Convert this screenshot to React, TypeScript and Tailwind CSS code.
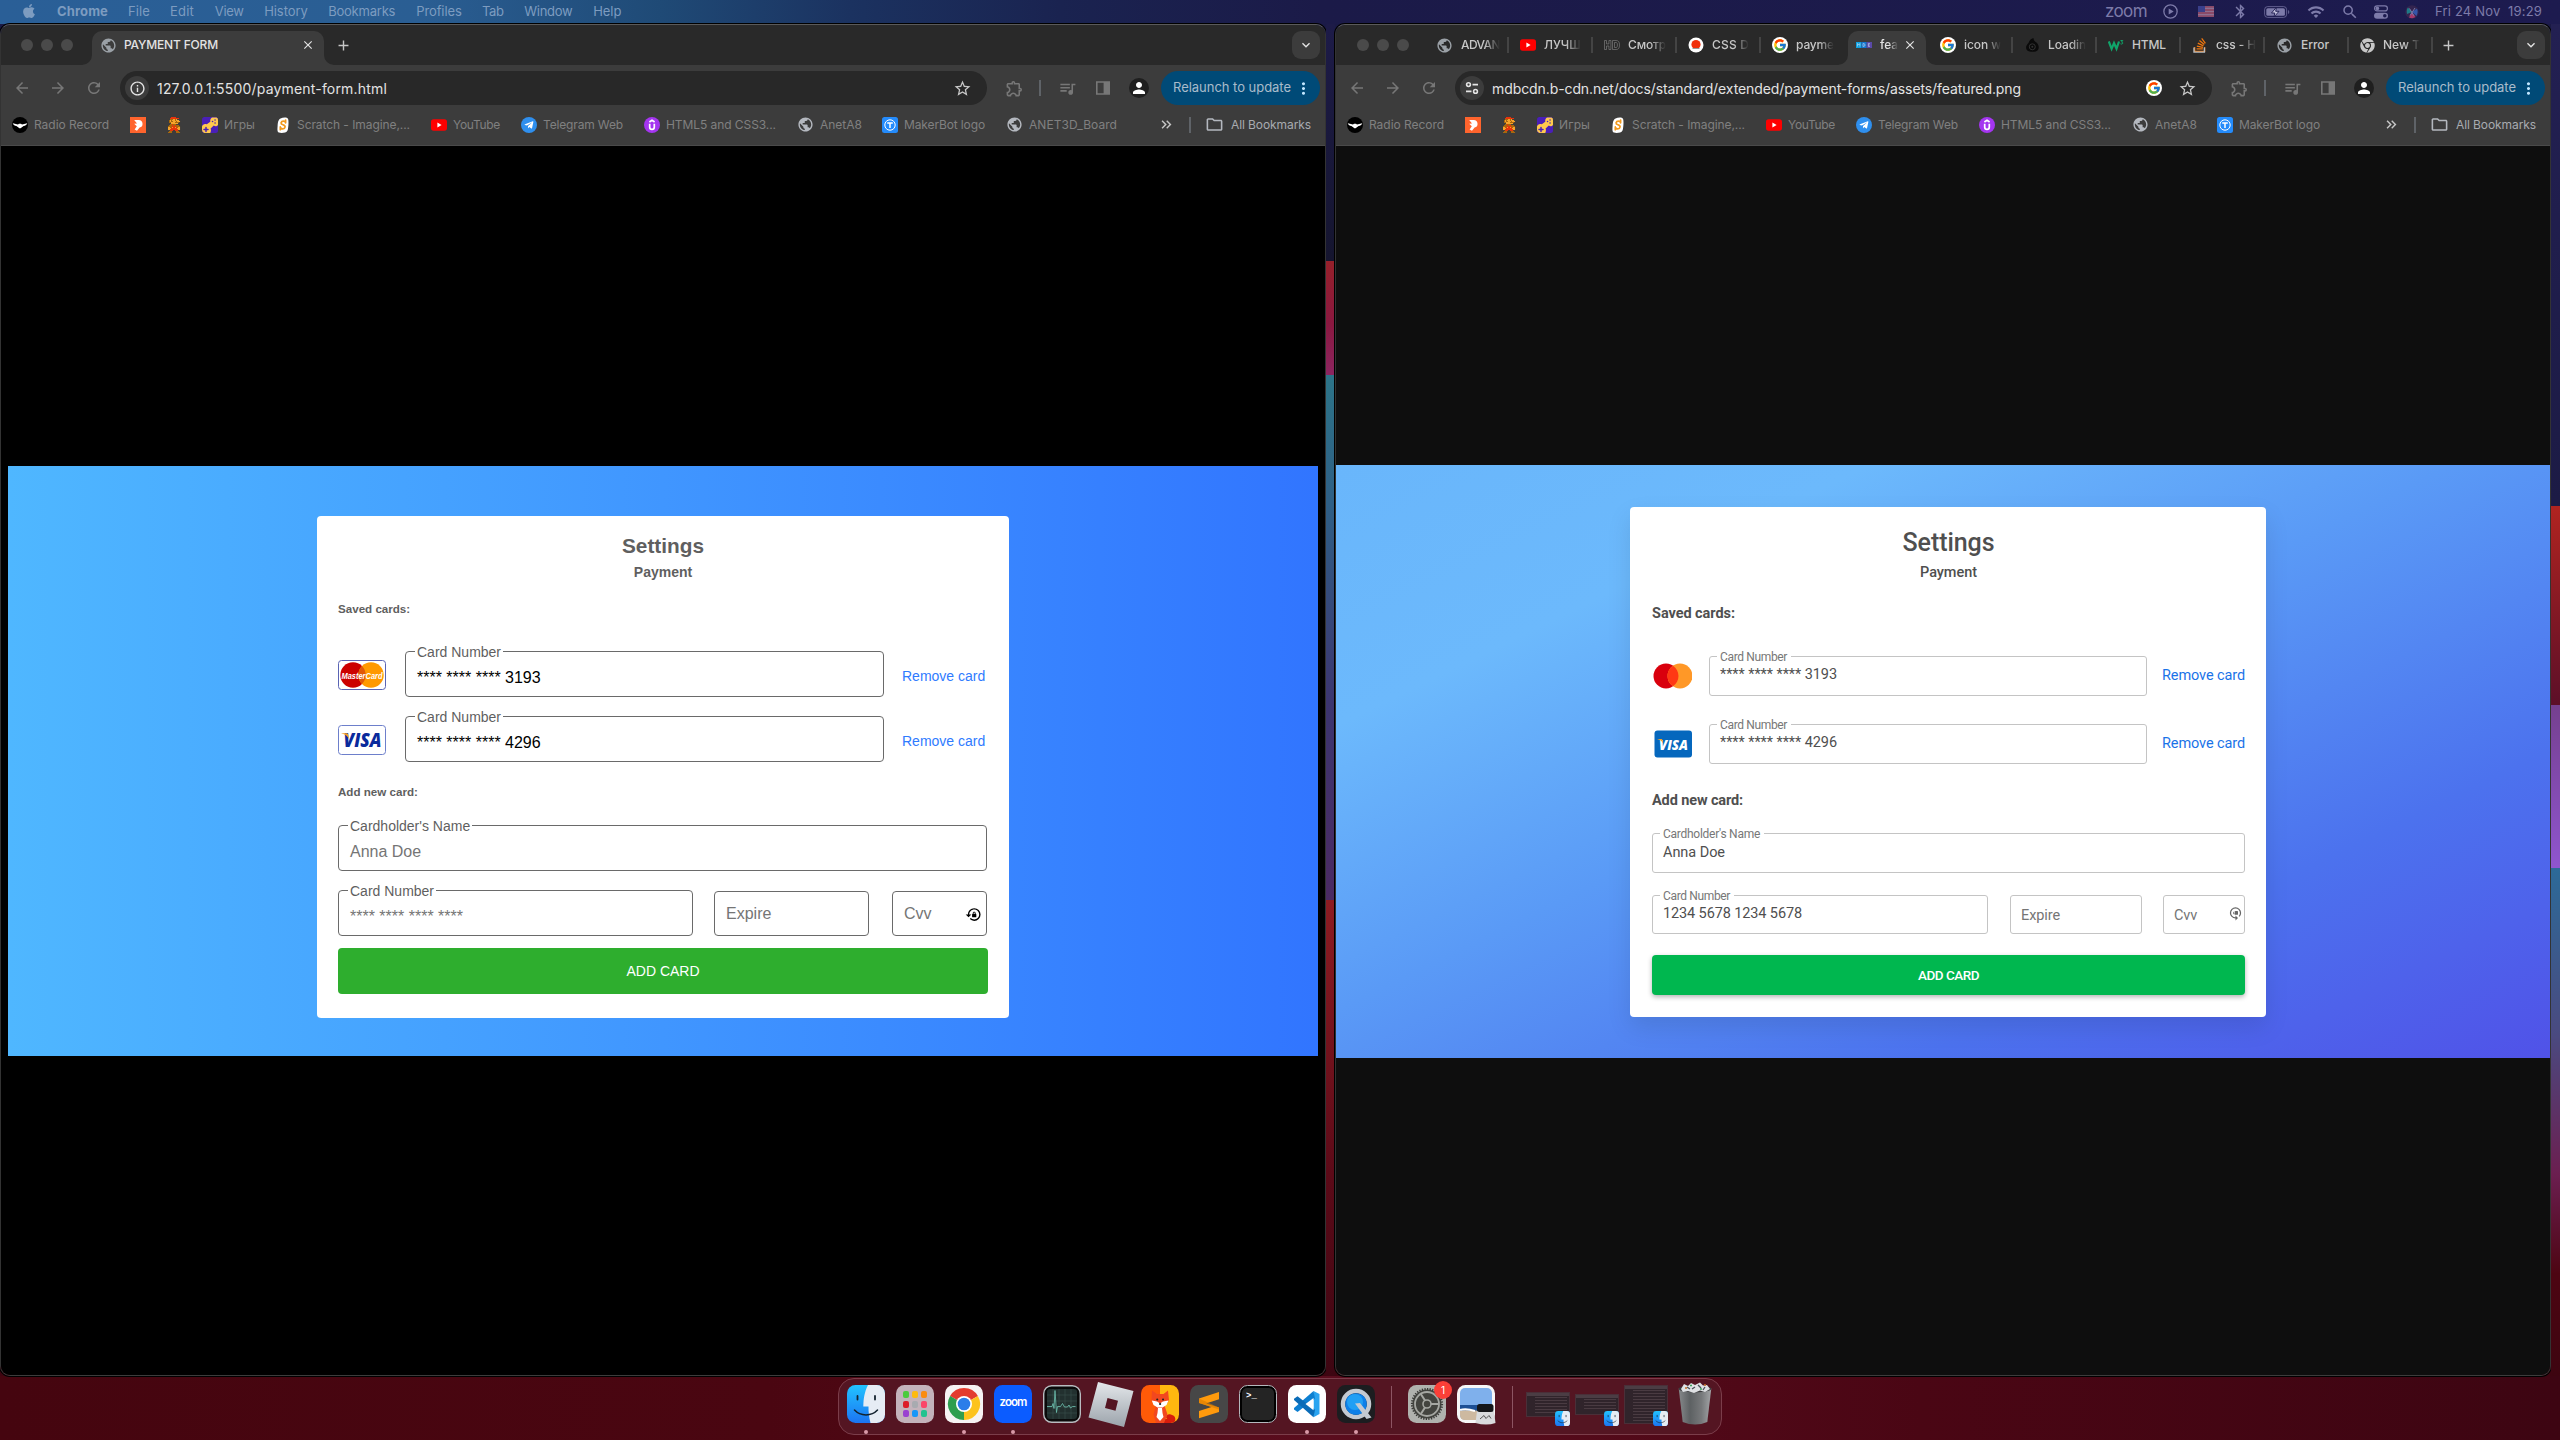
import React, { useLayoutEffect, useRef, useState } from "react";
import { FaApple, FaTelegramPlane, FaStackOverflow, FaChrome } from "react-icons/fa";
import { FcGoogle } from "react-icons/fc";
import {
  MdArrowBack,
  MdArrowForward,
  MdRefresh,
  MdStarBorder,
  MdOutlineExtension,
  MdQueueMusic,
  MdPerson,
  MdOutlineFolder,
  MdMoreVert,
  MdPublic,
  MdLockReset,
  MdWifi,
  MdBluetooth,
  MdAdd,
  MdClose,
  MdKeyboardArrowDown,
  MdOutlineInfo,
  MdKeyboardDoubleArrowRight,
  MdSearch,
} from "react-icons/md";

/* Text tracked so that it fills a given width. */
function Fit({ w, className = "", children }: { w: number; className?: string; children: string }) {
  const ref = useRef<HTMLSpanElement>(null);
  const [ls, setLs] = useState(0);
  useLayoutEffect(() => {
    const el = ref.current;
    if (!el) return;
    setLs((w - el.getBoundingClientRect().width) / children.length);
  }, [w, children]);
  return (
    <span ref={ref} className={"inline-block whitespace-pre " + className} style={{ letterSpacing: ls + "px" }}>
      {children}
    </span>
  );
}

/* ---------- small icons ---------- */

const Globe = ({ c = "text-[#9aa0a6]" }: { c?: string }) => <MdPublic className={"size-[17px] shrink-0 " + c} />;

const YouTubeIcon = () => (
  <svg viewBox="0 0 16 16" className="size-4 shrink-0">
    <rect x="0" y="2.3" width="16" height="11.4" rx="2.6" fill="#f00" />
    <path d="M6.4 5.4 10.6 8 6.4 10.6z" fill="#fff" />
  </svg>
);

const RadioIcon = () => (
  <svg viewBox="0 0 16 16" className="size-4 shrink-0">
    <circle cx="8" cy="8" r="8" fill="#000" />
    <path d="M.8 6.2 6 7.4l1-.6h2l1 .6 5.2-1.2c-.3 1.600-1.600 2.500-3.600 2.700L9.600 10.600 8 11.400l-1.600-.8L4.400 8.900C2.400 8.700 1.100 7.800.8 6.200z" fill="#fff" />
  </svg>
);

const OrangeIcon = () => (
  <svg viewBox="0 0 16 16" className="size-4 shrink-0">
    <rect width="16" height="16" fill="#ff642d" />
    <path d="M4.200 3h4.600a3.800 3.800 0 0 1 .8 7.500l-2.600 3.300-2.400-1.300 2.200-3.200L4.200 6.800 7 6.500z" fill="#fff" />
  </svg>
);

const MARIO = [
  "...rrrrr....",
  "..rrrrrrrrr.",
  "..bbbyyby...",
  ".bybyyybyyy.",
  ".bybbyyybyyy",
  ".bbyyyybbbb.",
  "...yyyyyyy..",
  "..bbrbbb....",
  ".bbbrbbrbbb.",
  "bbbbrrrrbbbb",
  "yybryrryrbyy",
  "yyyrrrrrryyy",
  "yyrrrrrrrryy",
  "..rrr..rrr..",
  ".bbb....bbb.",
  "bbbb....bbbb",
];
const MarioIcon = () => (
  <svg viewBox="-2 0 16 16" className="size-4 shrink-0">
    {MARIO.flatMap((row, y) =>
      row.split("").map((ch, x) =>
        ch === "." ? null : (
          <rect key={x + "-" + y} x={x} y={y} width="1.050" height="1.050" fill={ch === "r" ? "#e6340c" : ch === "b" ? "#a8680c" : "#f5a42c"} />
        ),
      ),
    )}
  </svg>
);

const GamesIcon = () => (
  <svg viewBox="0 0 16 16" className="size-4 shrink-0">
    <rect width="16" height="16" rx="2.500" fill="#4a1fb8" />
    <path d="M10 .5h4.500Q16 .8 16 3v5c-1.200 1.600-3 1.500-4.200.6L8.600 11.500c.6 1.800.4 3-.4 4.500H2.500Q.2 15.600 0 13V9.500c.6-2.200 2.600-3 4.800-2.200L8.300 4.700C8 2.800 8.600 1.200 10 .5z" fill="#ffc94d" />
    <path d="M2 12.500h4M4 10.500v4M10.500 4.500h.1M13 3h.1M13 6h.1" stroke="#4a1fb8" strokeWidth="1.500" strokeLinecap="round" />
  </svg>
);

const ScratchIcon = () => (
  <svg viewBox="0 0 16 16" className="size-4 shrink-0">
    <path d="M5.500 1.500C8 .2 12 0 13 1.800c1 2 .4 9.500-.6 12C11.600 16 6 16.300 4 15.600c-2-.8-1.600-3-1.400-6.500C2.800 6 3 2.800 5.500 1.500z" fill="#fff" />
    <path d="M10.600 5.600c-.6-2-3.900-2.200-4.500.2-.5 2.400 4.400 1.500 4 4.200-.4 2.600-4.200 2.300-4.700.2M10.600 3v2.800M5.300 12.700v-2.800" stroke="#f39a1e" strokeWidth="1.700" fill="none" strokeLinecap="round" />
  </svg>
);

const TelegramIcon = () => (
  <span className="flex size-4 shrink-0 items-center justify-center rounded-full bg-[#2f8fee] text-white">
    <FaTelegramPlane className="mr-px size-[10px]" />
  </span>
);

const UdemyIcon = () => (
  <svg viewBox="0 0 16 16" className="size-4 shrink-0">
    <circle cx="8" cy="8" r="8" fill="#a435f0" />
    <path d="M5.400 5 8 3.300 10.600 5M5.700 6.700V10c0 3.200 4.600 3.200 4.600 0V6.700" stroke="#fff" strokeWidth="1.700" fill="none" />
  </svg>
);

const MakerIcon = () => (
  <svg viewBox="0 0 16 16" className="size-4 shrink-0">
    <rect width="16" height="16" rx="2.500" fill="#248bfb" />
    <circle cx="8" cy="8" r="5.200" fill="none" stroke="#fff" strokeWidth="1" />
    <path d="M5.200 5.900h5.600M8 5.900v5.200" stroke="#fff" strokeWidth="1.500" />
  </svg>
);

const HdIcon = () => (
  <svg viewBox="0 0 16 16" className="size-4 shrink-0" fill="#292929" stroke="#8a8a8a" strokeWidth=".6">
    <path d="M.5 3.500h2v3.400h2.400V3.500h2v9h-2V9H2.500v3.500h-2zM8.500 3.500H12c2.500 0 3.500 1.500 3.500 4.500s-1 4.500-3.500 4.500H8.500zM10.500 5.500H12c1 0 1.400.8 1.400 2.500s-.4 2.500-1.400 2.500h-1.500z" fillRule="evenodd" />
  </svg>
);

const CssIcon = () => (
  <svg viewBox="0 0 16 16" className="size-4 shrink-0">
    <circle cx="8" cy="8" r="7.500" fill="#fff" />
    <circle cx="8" cy="7.500" r="4.600" fill="#f0300c" />
    <path d="M4.500 11.500h7" stroke="#999" strokeWidth="1" />
  </svg>
);

const GoogleIcon = () => (
  <span className="flex size-4 shrink-0 items-center justify-center rounded-full bg-white">
    <FcGoogle className="size-[14px]" />
  </span>
);

const MdbIcon = () => (
  <svg viewBox="0 0 16 16" className="size-4 shrink-0">
    <rect x="0" y="5" width="5.400" height="6" fill="#0fa0e0" />
    <rect x="5.400" y="5" width="5.300" height="6" fill="#1277d0" />
    <rect x="10.700" y="5" width="5.300" height="6" fill="#5a49a8" />
    <path d="M1.500 9.500v-3l1.200 1.500 1.200-1.500v3M7 6.500v3q2.500-.2 2-1.500.2-1.500-2-1.500M12.400 6.500v3h1.500M12.400 6.500h1.500M12.400 8h1.500" stroke="#cde" strokeWidth=".6" fill="none" />
  </svg>
);

const DropIcon = () => (
  <svg viewBox="0 0 16 16" className="size-4 shrink-0">
    <path d="M9.500 1C6 2 5.500 4 4.500 6c-2 2-3 4-2 6.500 1 2.500 9 3.500 11.500.5 1.500-3 .5-5.500-1.500-7.500-1-.8-3-1.500-3-4.500z" fill="#0a0a0a" />
    <circle cx="8.300" cy="9.800" r="3" fill="none" stroke="#333" strokeWidth="1" />
    <circle cx="8.300" cy="9.800" r="1" fill="#333" />
  </svg>
);

const W3Icon = () => (
  <svg viewBox="0 0 16 16" className="size-4 shrink-0" fill="none" stroke="#10a56a">
    <path d="M.8 4.500 3.600 11.800 6 6l2.500 5.800L11 4.500" strokeWidth="2.200" />
    <path d="M12.500 3.500h2.300L13.500 5q1.600.2 1.200 1.500-.8 1-2.200.3" strokeWidth="1" />
  </svg>
);

const StackIcon = () => (
  <span className="relative flex size-4 shrink-0">
    <FaStackOverflow className="size-4 text-[#f0760d]" />
    <svg viewBox="0 0 16 16" className="absolute inset-0 size-4" fill="none" stroke="#b8bcc0" strokeWidth="1.400">
      <path d="M2 10.500v4.600h10.400v-4.600" />
    </svg>
  </span>
);

const SiteInfo = () => (
  <svg viewBox="0 0 16 16" className="size-4" fill="none" stroke="#e3e3e3" strokeWidth="1.600">
    <circle cx="4.500" cy="4.600" r="1.900" />
    <path d="M8.500 4.600H14M2 11.400h5.500" />
    <circle cx="11.500" cy="11.400" r="1.900" />
  </svg>
);

/* ---------- browser window ---------- */

type Bookmark = { icon: React.ReactNode; label?: string; w: number; cell: string };

const BOOKMARKS: Bookmark[] = [
  { icon: <RadioIcon />, label: "Radio Record", w: 75, cell: "w-[118px]" },
  { icon: <OrangeIcon />, w: 0, cell: "w-[36px]" },
  { icon: <MarioIcon />, w: 0, cell: "w-[36px]" },
  { icon: <GamesIcon />, label: "Игры", w: 31, cell: "w-[73px]" },
  { icon: <ScratchIcon />, label: "Scratch - Imagine,...", w: 113, cell: "w-[156px]" },
  { icon: <YouTubeIcon />, label: "YouTube", w: 47, cell: "w-[90px]" },
  { icon: <TelegramIcon />, label: "Telegram Web", w: 80, cell: "w-[123px]" },
  { icon: <UdemyIcon />, label: "HTML5 and CSS3...", w: 110, cell: "w-[153px]" },
  { icon: <Globe c="text-[#b4b8bf]" />, label: "AnetA8", w: 42, cell: "w-[85px]" },
  { icon: <MakerIcon />, label: "MakerBot logo", w: 81, cell: "w-[124px]" },
  { icon: <Globe c="text-[#b4b8bf]" />, label: "ANET3D_Board", w: 88, cell: "w-[120px]" },
];

function BrowserWindow({
  width,
  lights,
  tabs,
  site,
  url,
  google,
  bookmarks,
  children,
}: {
  width: string;
  lights: string;
  tabs: React.ReactNode;
  site: React.ReactNode;
  url: React.ReactNode;
  google?: boolean;
  bookmarks: Bookmark[];
  children: React.ReactNode;
}) {
  return (
    <div className={"flex h-[1352px] shrink-0 flex-col overflow-hidden rounded-[10px] border border-[#5a5a5a] border-x-[#333] border-b-[#3c3c3c] shadow-[0_0_0_1px_#000] " + width}>
      <div className="flex h-10 shrink-0 items-end bg-[#292929]">
        <div className={"flex h-10 shrink-0 items-center gap-2 " + lights}>
          <span className="size-3 rounded-full bg-[#4a4a4a]" />
          <span className="size-3 rounded-full bg-[#4a4a4a]" />
          <span className="size-3 rounded-full bg-[#4a4a4a]" />
        </div>
        {tabs}
        <div className="mb-[6px] ml-auto mr-[5px] flex h-7 w-7 items-center justify-center rounded-[9px] bg-[#3c3c3c] text-[#e3e3e3]">
          <MdKeyboardArrowDown className="size-4" />
        </div>
      </div>
      <div className="flex h-[46px] shrink-0 items-center bg-[#3c3c3c] text-[#777]">
        <div className="flex w-[119px] shrink-0 items-center pl-3">
          <MdArrowBack className="size-[18px]" />
          <MdArrowForward className="ml-[18px] size-[18px]" />
          <MdRefresh className="ml-[18px] size-[18px]" />
        </div>
        <div className="flex h-[34px] flex-1 items-center rounded-full bg-[#282828] pl-[5px] pr-[15px] text-[#e3e3e3]">
          <span className="flex size-6 items-center justify-center rounded-full bg-[#3c3c3c]">{site}</span>
          <span className="ml-2 flex-1 text-[14px]">{url}</span>
          {google && (
            <span className="mr-4">
              <GoogleIcon />
            </span>
          )}
          <MdStarBorder className="size-[19px] text-[#c7c7c7]" />
        </div>
        <MdOutlineExtension className="ml-[18px] size-[19px] shrink-0" />
        <span className="ml-[15px] h-4 w-[2px] shrink-0 bg-[#5f6368]" />
        <MdQueueMusic className="ml-[17px] size-[19px] shrink-0" />
        <svg viewBox="0 0 18 18" className="ml-[17px] size-[18px] shrink-0" fill="#777">
          <path d="M2 2.200h14v13.600H2zM3.600 3.800v10.400h6V3.800z" fillRule="evenodd" />
        </svg>
        <span className="ml-[17px] flex size-5 shrink-0 items-center justify-center rounded-full bg-[#1f1f1f] text-white">
          <MdPerson className="size-[18px]" />
        </span>
        <div className="ml-3 mr-[5px] flex h-[34px] w-[159px] shrink-0 items-center rounded-full bg-[#004a77] pl-3 text-[13px] text-[#a9bccb]">
          <Fit w={118}>Relaunch to update</Fit>
          <MdMoreVert className="ml-[3px] size-[19px] text-[#c2e7ff]" />
        </div>
      </div>
      <div className="flex h-[35px] shrink-0 items-start border-b border-[#4a4a4a] bg-[#3c3c3c] pl-[11px] text-[12px] text-[#808080]">
        <div className="flex h-[27px] w-full items-center">
          {bookmarks.map((b, i) => (
            <div key={i} className={"flex shrink-0 items-center gap-[6px] " + b.cell}>
              {b.icon}
              {b.label && <Fit w={b.w}>{b.label}</Fit>}
            </div>
          ))}
          <div className="ml-auto flex shrink-0 items-center pr-[14px] text-[#a8abb0]">
            <MdKeyboardDoubleArrowRight className="size-[17px] text-[#c7c7c7]" />
            <span className="ml-[14px] h-4 w-[2px] bg-[#5f6368]" />
            <MdOutlineFolder className="ml-[14px] size-[19px] text-[#b4b8bf]" />
            <span className="ml-[7px]">
              <Fit w={80}>All Bookmarks</Fit>
            </span>
          </div>
        </div>
      </div>
      {children}
    </div>
  );
}

/* Concave foot on either side of the active tab. */
const Foot = ({ flip }: { flip?: boolean }) => (
  <svg viewBox="0 0 10 10" className={"size-[10px] shrink-0 self-end " + (flip ? "-scale-x-100" : "")}>
    <path d="M10 0v10H0A10 10 0 0 0 10 0z" fill="#3c3c3c" />
  </svg>
);

function Tab({ icon, label, w, noSep, fade = true }: { icon: React.ReactNode; label: string; w: number; noSep?: boolean; fade?: boolean }) {
  return (
    <div className="flex h-10 w-[84px] shrink-0 items-center pl-[11px] text-[12px] font-medium text-[#c7c7c7]">
      {icon}
      <span className={"ml-2 whitespace-nowrap " + (fade ? "[mask-image:linear-gradient(to_right,black_60%,transparent)]" : "")}>
        <Fit w={w}>{label}</Fit>
      </span>
      {!noSep && <span className="ml-auto h-4 w-[2px] bg-[#444]" />}
    </div>
  );
}

const LeftTabs = () => (
  <>
    <div className="ml-[8px] flex shrink-0">
      <Foot />
      <div className="flex h-[34px] w-[232px] items-center rounded-t-[10px] bg-[#3c3c3c] pb-[6px] pl-2 text-[12px] font-medium text-[#e3e3e3]">
        <Globe />
        <span className="ml-[7px]">
          <Fit w={94}>PAYMENT FORM</Fit>
        </span>
        <MdClose className="ml-auto mr-[9px] size-[14px]" />
      </div>
      <Foot flip />
    </div>
    <MdAdd className="mb-[11px] ml-px size-[17px] text-[#c7c7c7]" />
  </>
);

const RightTabs = () => (
  <>
    <Tab icon={<Globe />} label="ADVAN" w={39} />
    <Tab icon={<YouTubeIcon />} label="ЛУЧШ" w={37} />
    <Tab icon={<HdIcon />} label="Смотр" w={38} />
    <Tab icon={<CssIcon />} label="CSS D" w={37} />
    <Tab icon={<GoogleIcon />} label="payme" w={38} noSep />
    <div className="-ml-[7px] flex shrink-0">
      <Foot />
      <div className="flex h-[34px] w-[78px] items-center rounded-t-[10px] bg-[#3c3c3c] pb-[6px] pl-2 text-[12px] font-medium text-[#e3e3e3]">
        <MdbIcon />
        <span className="ml-2 whitespace-nowrap [mask-image:linear-gradient(to_right,black_50%,transparent)]">
          <Fit w={18}>fea</Fit>
        </span>
        <MdClose className="ml-auto mr-[9px] size-[14px]" />
      </div>
      <Foot flip />
    </div>
    <div className="-ml-[7px] flex shrink-0">
      <Tab icon={<GoogleIcon />} label="icon w" w={37} />
      <Tab icon={<DropIcon />} label="Loadin" w={38} />
      <Tab icon={<W3Icon />} label="HTML" w={34} fade={false} />
      <Tab icon={<StackIcon />} label="css - H" w={40} />
      <Tab icon={<Globe />} label="Error" w={28} fade={false} />
      <Tab icon={<FaChrome className="size-[15px] shrink-0 text-[#c7c7c7]" />} label="New T" w={37} />
    </div>
    <MdAdd className="mb-[11px] ml-[7px] size-[17px] text-[#c7c7c7]" />
  </>
);

/* ---------- payment form, browser default look ---------- */

function LeftField({ label, children, className, shift = "pt-[7px]" }: { label?: string; children: React.ReactNode; className: string; shift?: string }) {
  return (
    <div className={"relative flex items-center rounded-[4px] border border-[#6a6a6a] pl-[11px] text-[16px] leading-5 " + className + " " + shift}>
      {label && <span className="absolute -top-2 left-[9px] bg-white px-[2px] text-[14px] leading-4 text-[#5f5f5f]">{label}</span>}
      {children}
    </div>
  );
}

const MasterCardClassic = () => (
  <svg viewBox="0 0 48 30" className="mt-px h-[30px] w-12 shrink-0">
    <rect x=".5" y=".5" width="47" height="29" rx="3" fill="#fff" stroke="#5a64b4" />
    <circle cx="15" cy="15" r="12.700" fill="#c00" />
    <circle cx="33" cy="15" r="12.700" fill="#f90" />
    <path d="M24 6.100a12.700 12.700 0 0 1 0 17.800 12.700 12.700 0 0 1 0-17.800z" fill="#e0590a" />
    <text x="3.500" y="18.500" textLength="41" lengthAdjust="spacingAndGlyphs" fontFamily="Liberation Sans" fontWeight="700" fontStyle="italic" fontSize="9" fill="#fff">
      MasterCard
    </text>
  </svg>
);

const VisaClassic = () => (
  <svg viewBox="0 0 48 30" className="mt-[2px] h-[30px] w-12 shrink-0">
    <rect x=".5" y=".5" width="47" height="29" rx="3" fill="#fff" stroke="#6d7fcb" />
    <text x="5.500" y="21.500" textLength="38" lengthAdjust="spacingAndGlyphs" fontFamily="Open Sans" fontWeight="800" fontStyle="italic" fontSize="18.500" fill="#0a2a9c">
      VISA
    </text>
    <path d="M3.500 8.200h4.800c1.200 0 1.700.5 2 1.500l1 4.800C9.800 11.500 7.200 9.200 3.500 8.600z" fill="#f7a021" />
  </svg>
);

const LeftCard = () => (
  <div className="flex h-[502px] w-[692px] flex-col rounded-[4px] bg-white px-[21px] pt-[18px] font-['Liberation_Sans',Arial,sans-serif] text-[#5f5f5f]">
    <h1 className="text-center text-[20.8px] font-bold leading-6">Settings</h1>
    <h2 className="mt-1 text-center text-[14px] font-bold leading-5">Payment</h2>
    <h3 className="mt-[19px] text-[11.600px] font-bold leading-4">Saved cards:</h3>
    {["3193", "4296"].map((n, i) => (
      <div key={n} className={"flex h-[46px] shrink-0 items-center " + (i ? "mt-[19px]" : "mt-[34px]")}>
        {i ? <VisaClassic /> : <MasterCardClassic />}
        <LeftField label="Card Number" className="ml-[19px] h-[46px] w-[479px] text-black" shift="pt-2">
          **** **** **** {n}
        </LeftField>
        <a className="ml-[18px] pt-[3px] text-[14px] leading-4 text-[#2f7bff]">Remove card</a>
      </div>
    ))}
    <h3 className="mt-[22px] text-[11.600px] font-bold leading-4">Add new card:</h3>
    <LeftField label="Cardholder's Name" className="mt-[25px] h-[46px] w-[649px] text-[#757575]">
      Anna Doe
    </LeftField>
    <div className="mt-[19px] flex items-end">
      <LeftField label="Card Number" className="h-[46px] w-[355px] text-[#757575]">
        **** **** **** ****
      </LeftField>
      <LeftField className="ml-[21px] h-[45px] w-[155px] text-[#757575]" shift="pt-px">
        Expire
      </LeftField>
      <LeftField className="ml-[23px] h-[45px] w-[95px] pr-1 text-[#757575]" shift="pt-px">
        Cvv
        <MdLockReset className="ml-auto size-[17px] text-black" />
      </LeftField>
    </div>
    <div className="mt-3 flex h-[46px] items-center justify-center rounded-[4px] bg-[#2eae2e] text-[14px] text-white">ADD CARD</div>
  </div>
);

/* ---------- payment form, material look ---------- */

function RightField({ label, labelW = 0, children, className }: { label?: string; labelW?: number; children: React.ReactNode; className: string }) {
  return (
    <div className={"relative flex items-center rounded-[3px] border border-[#c4c4c4] pl-[10px] text-[14.500px] leading-5 " + className}>
      {label && (
        <span className="absolute -top-[8px] left-[7px] bg-white pl-[3px] pr-1 text-[12px] leading-4 text-[#777]">
          <Fit w={labelW}>{label}</Fit>
        </span>
      )}
      {children}
    </div>
  );
}

const MasterCardFlat = () => (
  <svg viewBox="0 0 40 28" className="h-7 w-10 shrink-0">
    <circle cx="14" cy="14" r="12.500" fill="#d9000d" />
    <circle cx="28" cy="14" r="12.500" fill="#ff9827" />
    <path d="M21 3.650a12.500 12.500 0 0 1 0 20.700 12.500 12.500 0 0 1 0-20.700z" fill="#ff3814" />
  </svg>
);

const VisaFlat = () => (
  <svg viewBox="0 0 40 28" className="h-7 w-10 shrink-0">
    <rect x="2.500" y=".5" width="37.500" height="27" rx="3" fill="#0567bd" />
    <text x="7" y="19.500" textLength="29" lengthAdjust="spacingAndGlyphs" fontFamily="Open Sans" fontWeight="800" fontStyle="italic" fontSize="14" fill="#fff">
      VISA
    </text>
    <path d="M5.500 9h3.500c1 0 1.300.4 1.500 1.200l.7 3.200C9.800 11 8 9.600 5.500 9.300z" fill="#f7a021" />
  </svg>
);

const RightCard = () => (
  <div className="flex h-[510px] w-[636px] flex-col rounded-[4px] bg-white pl-[22px] pr-[21px] pt-[22px] font-[Roboto,sans-serif] text-[#4f4f4f] shadow-[0_10px_25px_rgba(0,0,0,0.1)]">
    <h1 className="text-center text-[25px] font-medium leading-7">
      <Fit w={92}>Settings</Fit>
    </h1>
    <h2 className="mt-2 text-center text-[14.500px] font-medium leading-4">
      <Fit w={57}>Payment</Fit>
    </h2>
    <h3 className="mt-[25px] text-[14.500px] font-bold leading-4">
      <Fit w={83}>Saved cards:</Fit>
    </h3>
    {["3193", "4296"].map((n, i) => (
      <div key={n} className={"flex h-10 shrink-0 items-center " + (i ? "mt-7" : "mt-[34px]")}>
        {i ? <VisaFlat /> : <MasterCardFlat />}
        <RightField label="Card Number" labelW={67} className="ml-[17px] h-10 w-[438px] pb-[3px]">
          <Fit w={117}>{"**** **** **** " + n}</Fit>
        </RightField>
        <a className="ml-[15px] text-[14.500px] leading-4 text-[#1a73e8]">
          <Fit w={83}>Remove card</Fit>
        </a>
      </div>
    ))}
    <h3 className="mt-[29px] text-[14.500px] font-bold leading-4">
      <Fit w={91}>Add new card:</Fit>
    </h3>
    <RightField label="Cardholder's Name" labelW={97} className="mt-6 h-10 w-full pb-px">
      <Fit w={62}>Anna Doe</Fit>
    </RightField>
    <div className="mt-[22px] flex">
      <RightField label="Card Number" labelW={67} className="h-[39px] w-[336px] pb-[2px]">
        <Fit w={139}>1234 5678 1234 5678</Fit>
      </RightField>
      <RightField className="ml-[22px] h-[39px] w-[132px] pt-[2px] text-[#757575]">
        <Fit w={39}>Expire</Fit>
      </RightField>
      <RightField className="ml-auto h-[39px] w-[82px] pr-px pt-[2px] text-[#757575]">
        <Fit w={23}>Cvv</Fit>
        <MdLockReset className="mb-1 ml-auto size-[15px] -rotate-90 text-[#666]" />
      </RightField>
    </div>
    <div className="mt-[21px] flex h-10 items-center justify-center rounded-[4px] bg-[#00b74f] pt-px text-[13.500px] font-medium text-white shadow-[0_2px_5px_rgba(0,0,0,0.3)]">
      <Fit w={61}>ADD CARD</Fit>
    </div>
  </div>
);

/* ---------- menu bar ---------- */

const MENU: [string, number, string][] = [
  ["File", 22, "w-[42px]"],
  ["Edit", 24, "w-[44.700px]"],
  ["View", 29, "w-[49.500px]"],
  ["History", 43.5, "w-[64px]"],
  ["Bookmarks", 67, "w-[88px]"],
  ["Profiles", 45.5, "w-[65.800px]"],
  ["Tab", 21.5, "w-[42.300px]"],
  ["Window", 48, "w-[69px]"],
  ["Help", 28, "w-[40px]"],
];

const MenuBar = () => (
  <div className="flex h-6 shrink-0 items-center bg-[linear-gradient(to_right,#2a5f97_0px,#2a5e93_420px,#1f4a76_660px,#1b3260_850px,#1a2350_1060px,#1b1a48_1320px,#1d1b4f_2560px)] pl-[21px] text-[13px] text-[#7d9cc0]">
    <FaApple className="mb-[3px] size-[16px]" />
    <span className="ml-5 w-[71px] font-bold">
      <Fit w={51}>Chrome</Fit>
    </span>
    {MENU.map(([t, w, cell]) => (
      <span key={t} className={"shrink-0 " + cell}>
        <Fit w={w}>{t}</Fit>
      </span>
    ))}
    <div className="ml-auto flex items-center pb-px pr-[18px] text-[#7d7ba9]">
      <Fit w={42} className="pb-[2px] text-[17px] leading-5">
        zoom
      </Fit>
      <svg viewBox="0 0 14 14" className="ml-[16px] size-[15px]">
        <circle cx="7" cy="7" r="6.200" fill="none" stroke="currentColor" strokeWidth="1.200" />
        <path d="M5.300 4.200 10 7 5.300 9.800z" fill="currentColor" />
      </svg>
      <svg viewBox="0 0 16 11" className="ml-[20px] h-[11px] w-4">
        <rect width="16" height="11" fill="#8a4a68" />
        <path d="M0 2.400h16M0 5.500h16M0 8.600h16" stroke="#8f6f90" strokeWidth="1.200" />
        <rect width="7" height="6" fill="#3a3f8a" />
      </svg>
      <MdBluetooth className="ml-[18px] size-[17px]" />
      <svg viewBox="0 0 26 12" className="ml-[15px] h-3 w-[26px]">
        <rect x=".6" y=".6" width="22" height="10.800" rx="3" fill="none" stroke="currentColor" opacity=".7" />
        <rect x="2.300" y="2.300" width="18.600" height="7.400" rx="1.500" fill="currentColor" />
        <path d="M24 4v4q1.300-.6 1.300-2T24 4z" fill="currentColor" opacity=".7" />
        <path d="M12.500 1.200 7.500 7h3.300l-.8 4 5-5.700h-3.300z" fill="#c8c6e0" stroke="#1d1b4f" strokeWidth=".9" />
      </svg>
      <MdWifi className="ml-[17px] size-[18px]" />
      <MdSearch className="ml-[16px] size-[18px]" />
      <svg viewBox="0 0 14 14" className="ml-[15px] size-[14px]">
        <rect x=".6" y=".9" width="12.800" height="5" rx="2.500" fill="none" stroke="currentColor" strokeWidth="1.200" />
        <circle cx="3.400" cy="3.400" r="1.800" fill="currentColor" />
        <rect x="0" y="7.800" width="14" height="6" rx="3" fill="currentColor" />
        <circle cx="10.800" cy="10.800" r="1.800" fill="#1d1b4f" />
      </svg>
      <svg viewBox="0 0 14 14" className="ml-[17px] size-[14px]">
        <circle cx="7" cy="7" r="6.800" fill="#33244f" />
        <path d="M7 7 3 2.500Q1 5 2 9z" fill="#1d7a86" />
        <path d="M7 7 12 3.500Q13.500 7 11.500 11z" fill="#3556a8" />
        <path d="M7 7 4 12.500Q8 14 10.500 12z" fill="#a83a6a" />
        <path d="M4.500 3.500 9 11M10 3 5 10.500" stroke="#7a7aa8" strokeWidth="1" />
      </svg>
      <Fit w={107} className="ml-[16px]">
        Fri 24 Nov  19:29
      </Fit>
    </div>
  </div>
);

/* ---------- dock ---------- */

const FinderArt = ({ id }: { id: string }) => (
  <svg viewBox="0 0 38 38" className="size-full">
    <defs>
      <linearGradient id={id} x1="0" y1="0" x2="0" y2="1">
        <stop offset="0" stopColor="#22c3ff" />
        <stop offset="1" stopColor="#1b74f2" />
      </linearGradient>
      <clipPath id={id + "c"}>
        <rect width="38" height="38" rx="8.500" />
      </clipPath>
    </defs>
    <g clipPath={"url(#" + id + "c)"}>
      <rect width="38" height="38" fill={"url(#" + id + ")"} />
      <path d="M21 0C17.500 7 16.500 13 16.300 21.500h5.200C21.400 27 22 32 23.500 38H38V0z" fill="#e6ecf4" />
      <path d="M10.500 11v3.500M28 11v3.500" stroke="#14232f" strokeWidth="1.800" strokeLinecap="round" />
      <path d="M7.500 25c6 6.500 17 6.500 23 0" stroke="#14232f" strokeWidth="1.500" fill="none" strokeLinecap="round" />
    </g>
  </svg>
);

const LAUNCH = ["bg-[#4ccb3c]", "bg-[#fdbb11]", "bg-[#fb8c10]", "bg-[#dc1d28]", "bg-[#a8abb0]", "bg-[#fb4568]", "bg-[#9a42d0]", "bg-[#1897f8]", "bg-[#22c38f]"];

const LaunchpadArt = () => (
  <div className="grid size-full grid-cols-3 content-center justify-center gap-[2.500px] rounded-[8.500px] bg-[#c4b3bb] px-[6.500px]">
    {LAUNCH.map((c) => (
      <span key={c} className={"h-[7px] rounded-[2px] " + c} />
    ))}
  </div>
);

const ChromeArt = () => (
  <svg viewBox="0 0 38 38" className="size-full">
    <rect width="38" height="38" rx="8.500" fill="#f6f3f3" />
    <path d="M19 19 5.100 11A16 16 0 0 1 32.900 11z" fill="#e33b2e" />
    <path d="M19 19 32.900 11A16 16 0 0 1 19 35z" fill="#fcc31e" />
    <path d="M19 19v16A16 16 0 0 1 5.100 11z" fill="#2f9e4f" />
    <path d="M19 11h13.900L19 12z" fill="#e33b2e" />
    <path d="M12.100 23 5.100 11 14 18z" fill="#2f9e4f" />
    <path d="M25.900 23 19 35l4-14z" fill="#fcc31e" />
    <circle cx="19" cy="19" r="8" fill="#fff" />
    <circle cx="19" cy="19" r="6.300" fill="#2b7de9" />
  </svg>
);

const ZoomArt = () => (
  <div className="flex size-full items-center justify-center rounded-[8.500px] bg-[#0b5cff] pb-[2px] text-[11.500px] font-semibold text-white">
    <Fit w={27}>zoom</Fit>
  </div>
);

const MonitorArt = () => (
  <svg viewBox="0 0 38 38" className="size-full">
    <rect x=".7" y=".7" width="36.600" height="36.600" rx="8" fill="#0a0a0a" stroke="#b9bcc0" strokeWidth="1.400" />
    <rect x="4" y="4" width="30" height="30" rx="3" fill="#22302f" />
    <path d="M4 10h30M4 16h30M4 22h30M4 28h30M10 4v30M16 4v30M22 4v30M28 4v30" stroke="#3f5552" strokeWidth=".5" />
    <path d="M4 21.500h5l1-3 1 5 1-18 1.500 22 1-6h3l2-3 2 3.500h3l1.500-2 1.500 3 2-1.500h3" stroke="#6fc4b3" strokeWidth=".8" fill="none" />
  </svg>
);

const RobloxArt = () => (
  <svg viewBox="0 0 46 46" className="-m-1 size-[46px]">
    <defs>
      <linearGradient id="rbx" x1="0" y1="0" x2="0" y2="1">
        <stop offset="0" stopColor="#e4e7ea" />
        <stop offset="1" stopColor="#9ba3ab" />
      </linearGradient>
    </defs>
    <path d="M10 1 45.500 10 36 46 .5 36.500zM19.500 17l-2.500 10 10.500 2.700L30 19.700z" fill="url(#rbx)" fillRule="evenodd" />
  </svg>
);

const FoxArt = () => (
  <svg viewBox="0 0 38 38" className="size-full">
    <defs>
      <clipPath id="foxc">
        <rect width="38" height="38" rx="8.500" />
      </clipPath>
    </defs>
    <g clipPath="url(#foxc)">
      <rect width="19" height="38" fill="#ff5a08" />
      <rect x="19" width="19" height="38" fill="#ffb70f" />
      <path d="M15 38c4-4 6-4 11-4-3-3 2-6 5-4 4 1 4 5 2 8z" fill="#d81c0c" />
      <path d="M11 5.500 16 9h6.500L27 5.500l1 9.500-1.500 3-3 2.500 3 9L23 38h-8l-2.500-8.500 2.500-9-3-2.500-1.500-3z" fill="#f2481f" />
      <path d="M10.800 15.500 16 16.500l3 2 3-2 5.500-1L25.500 20l-4 2.500h-5l-4-2.500zM17 23h4l.5 5 1 4-3.500 4-3.500-4 1-4z" fill="#fff" />
      <path d="M16.200 14.500h.1M22 14.500h.1M19 19h.2" stroke="#222" strokeWidth="2" strokeLinecap="round" />
    </g>
  </svg>
);

const SublimeArt = () => (
  <svg viewBox="0 0 38 38" className="size-full">
    <rect width="38" height="38" rx="8.500" fill="#474747" />
    <path d="M9 13.500 29 7v7.300l-13 4.200 13 4V27L9 33.300V26l12.500-4L9 18z" fill="#ff9a0c" />
    <path d="M9 13.500v4.500l20 6.500v-2z" fill="#d87b00" opacity=".6" />
  </svg>
);

const TerminalArt = () => (
  <div className="size-full rounded-[8.500px] border-[1.500px] border-[#b5b8bd] bg-black p-[2px]">
    <div className="size-full rounded-[5px] bg-[#242424] pl-1 pt-[2px] font-['Liberation_Mono',monospace] text-[9px] font-bold leading-[12px] text-white">&gt;_</div>
  </div>
);

const VsCodeArt = () => (
  <svg viewBox="0 0 38 38" className="size-full">
    <rect width="38" height="38" rx="8.500" fill="#fff" />
    <path d="m25.500 6 6 3v20l-6 3.200z" fill="#2aa4f0" />
    <path d="m25.500 6 1.500 7.500L9.500 27 6 24.500 6 23z" fill="#0d7fd1" />
    <path d="m25.500 32.200 1.500-7.500L9.500 11.200 6 13.700V15z" fill="#0a6cb8" />
    <path d="M25.500 13v12.200L17.500 19z" fill="#fff" />
  </svg>
);

const QuickTimeArt = () => (
  <svg viewBox="0 0 38 38" className="size-full">
    <rect width="38" height="38" rx="8.500" fill="#1c1d20" />
    <circle cx="19" cy="19" r="13" fill="none" stroke="#c4c9d1" strokeWidth="4.500" />
    <circle cx="19" cy="19" r="10.800" fill="#0e7fe8" />
    <circle cx="18" cy="17" r="8" fill="#2fb4fb" opacity=".6" />
    <path d="m18 18.500 5-.5 11.500 14.500-5 1.500z" fill="#c4c9d1" />
  </svg>
);

const SettingsArt = () => (
  <div className="relative size-full">
    <svg viewBox="0 0 38 38" className="size-full">
      <rect width="38" height="38" rx="8.500" fill="#b0b2ae" />
      <circle cx="19" cy="19" r="14.500" fill="#43443f" />
      <circle cx="19" cy="19" r="15" fill="none" stroke="#3a3b38" strokeWidth="2.200" strokeDasharray="1.300 1.300" />
      <circle cx="19" cy="19" r="12" fill="none" stroke="#a5a7a2" strokeWidth="1.800" />
      <circle cx="19" cy="19" r="4" fill="none" stroke="#a5a7a2" strokeWidth="1.600" />
      <path d="M23 19h8M17 15.500 12.800 9M17 22.500l-4.200 6.500" stroke="#a5a7a2" strokeWidth="2" />
    </svg>
    <span className="absolute -right-[6px] -top-1 flex size-[18px] items-center justify-center rounded-full bg-[#fb3f38] text-[10px] text-white">1</span>
  </div>
);

const PreviewArt = () => (
  <svg viewBox="0 0 39 40" className="h-10 w-[39px]">
    <rect width="38" height="38" rx="8.500" fill="#f7f7f7" />
    <rect x="3" y="3" width="32" height="32" rx="5" fill="#7fb0ec" />
    <path d="M3 20h32v7H3z" fill="#1d4f94" />
    <path d="M3 26c6-2 10 1 17-.5V35H8q-5 0-5-5z" fill="#cdb9a0" />
    <path d="M3 25q6-2 15 1" stroke="#fff" strokeWidth="2" fill="none" />
    <path d="M20 26h17l1.500 12q-9 3-20 0z" fill="#d9dbdd" />
    <rect x="20" y="19" width="16.500" height="8" rx="2.500" fill="#15171a" />
    <path d="M23 34l4-3.500 2 3 3-3 2 3" stroke="#555" strokeWidth="1" fill="none" />
  </svg>
);

function MiniWindow({ h, lines, id }: { h: string; lines: number; id: string }) {
  return (
    <div className="relative flex h-[39px] w-11 items-center">
      <div className={"w-11 overflow-hidden border border-[#4a2f38] bg-[#30242b] " + h}>
        <div className="h-[3px] bg-[#4b3d44]" />
        <div className="ml-[8px] mt-px flex flex-col gap-[2px]">
          {Array.from({ length: lines }, (_, i) => (
            <span key={i} className="h-px w-[32px] bg-[#4a3b42]" />
          ))}
        </div>
      </div>
      <div className="absolute -bottom-[2px] right-0 size-[15px]">
        <FinderArt id={id} />
      </div>
    </div>
  );
}

const TrashArt = () => (
  <svg viewBox="0 0 34 44" className="h-11 w-[34px]">
    <defs>
      <linearGradient id="bin" x1="0" x2="1">
        <stop offset="0" stopColor="#86898b" />
        <stop offset=".35" stopColor="#5d6163" />
        <stop offset=".7" stopColor="#77797b" />
        <stop offset="1" stopColor="#a3a5a7" />
      </linearGradient>
    </defs>
    <path d="M.7 6.500h32.600L29.300 40q-12 5-24.600 0z" fill="url(#bin)" />
    <ellipse cx="17" cy="6.800" rx="16.300" ry="3.600" fill="#3a3a3c" />
    <path d="M3 7 6 2l4 2 3-3 4 2 5-2.500 3 3 4-.5 3 4-5 3-5-1.500-6 2.500-6-2-5 1z" fill="#dfe1e4" />
    <path d="M9 5l3 2M20 3l3 3M27 5l-2 3M14 7l3-2" stroke="#4a5058" strokeWidth="1.300" />
    <path d="M12 3.500h2M22 7h2" stroke="#38a05a" strokeWidth="1.500" />
    <path d="M26 3h2M7 6h2" stroke="#c8702a" strokeWidth="1.500" />
  </svg>
);

const DockItem = ({ children, dot, className = "w-[49px]" }: { children: React.ReactNode; dot?: boolean; className?: string }) => (
  <div className={"flex h-full shrink-0 flex-col items-start pt-[6px] " + className}>
    <div className="relative size-[38px]">{children}</div>
    {dot && <span className="ml-[17px] mt-[7px] size-1 rounded-full bg-[#d99aa8]" />}
  </div>
);

const Dock = () => (
  <div className="flex h-[57px] w-[884px] shrink-0 items-start rounded-[16px] border border-[#7b3d4a] bg-[#541522] pl-2">
    <DockItem dot><FinderArt id="finder" /></DockItem>
    <DockItem><LaunchpadArt /></DockItem>
    <DockItem dot><ChromeArt /></DockItem>
    <DockItem dot><ZoomArt /></DockItem>
    <DockItem><MonitorArt /></DockItem>
    <DockItem><RobloxArt /></DockItem>
    <DockItem><FoxArt /></DockItem>
    <DockItem><SublimeArt /></DockItem>
    <DockItem><TerminalArt /></DockItem>
    <DockItem dot><VsCodeArt /></DockItem>
    <DockItem dot className="w-[54px]"><QuickTimeArt /></DockItem>
    <span className="mt-[7px] h-[42px] w-px bg-[#8d5563]" />
    <DockItem className="ml-4 w-[49px]"><SettingsArt /></DockItem>
    <DockItem className="w-[55px]"><PreviewArt /></DockItem>
    <span className="mt-[7px] h-[42px] w-px bg-[#8d5563]" />
    <div className="ml-[13px] mt-[6px] flex items-center gap-[5px]">
      <MiniWindow h="h-[25px]" lines={6} id="mini-a" />
      <MiniWindow h="h-[21px]" lines={4} id="mini-b" />
      <MiniWindow h="h-[39px]" lines={11} id="mini-c" />
    </div>
    <div className="ml-[10px] mt-[3px]">
      <TrashArt />
    </div>
  </div>
);

export default function App() {
  return (
    <div className="flex h-[1440px] w-[2560px] flex-col overflow-hidden bg-[linear-gradient(to_right,#45050f,#4a0611_30%,#5a0d1e_52%,#4a0614_75%,#3d0512)] font-[Inter,sans-serif]">
      <MenuBar />
      <div className="flex h-[1352px] shrink-0 bg-[linear-gradient(to_bottom,#1a1a45_0%,#1a1a45_60%,#4a0812_80%,#3d0510)]">
        <BrowserWindow
          width="w-[1326px]"
          lights="w-[73px] pl-5"
          tabs={<LeftTabs />}
          site={<MdOutlineInfo className="size-[17px]" />}
          url={<Fit w={230}>127.0.0.1:5500/payment-form.html</Fit>}
          bookmarks={BOOKMARKS}
        >
          <div className="flex flex-1 flex-col bg-black px-[7px] pt-[320px]">
            <div className="flex h-[590px] justify-center bg-[linear-gradient(to_right,#4fb7ff,#3175ff)] pt-[50px]">
              <LeftCard />
            </div>
          </div>
        </BrowserWindow>
        <div className="h-full w-[9px] shrink-0 bg-[linear-gradient(to_bottom,#1d1b48_0px,#15152f_237px,#96202a_237px,#8a1840_300px,#8c2560_351px,#2c7488_351px,#2f5f86_480px,#3c3570_680px,#4b2a63_876px,#8e1c22_876px,#5c0a18_1150px,#3d0612_1352px)]" />
        <BrowserWindow
          width="w-[1216px]"
          lights="w-[89px] pl-[21px]"
          tabs={<RightTabs />}
          site={<SiteInfo />}
          url={<Fit w={529}>mdbcdn.b-cdn.net/docs/standard/extended/payment-forms/assets/featured.png</Fit>}
          google
          bookmarks={BOOKMARKS.slice(0, 10)}
        >
          <div className="flex flex-1 flex-col bg-[#0e0e0e] pt-[319px]">
            <div className="flex h-[593px] justify-center bg-[linear-gradient(to_bottom_right,#69b6fb,#6cb9fc_22%,#5a9af6_46%,#4c72ee_74%,#5052e8)] pl-[10px] pt-[42px]">
              <RightCard />
            </div>
          </div>
        </BrowserWindow>
        <div className="h-full flex-1 bg-[linear-gradient(to_bottom,#232052_0px,#1c1b45_482px,#b02420_482px,#5c0f28_681px,#75408f_681px,#8f55cf_844px,#2c6a98_844px,#4a4a80_1010px,#6b1f50_1150px,#4d0512_1250px,#3d0510)]" />
      </div>
      <div className="flex justify-center pt-[2px]">
        <Dock />
      </div>
    </div>
  );
}
